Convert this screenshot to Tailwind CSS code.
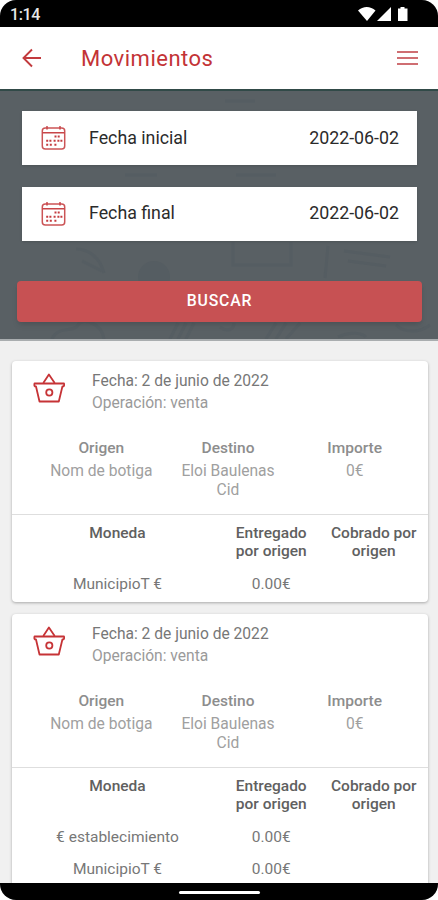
<!DOCTYPE html>
<html lang="es">
<head>
  <meta charset="UTF-8" />
  <meta name="viewport" content="width=device-width, initial-scale=1.0"/>
  <title>Movimientos</title>
  <script src="https://cdn.jsdelivr.net/npm/@tailwindcss/browser@4"></script>
</head>
<body class="bg-white font-['Roboto',sans-serif]">

  <!-- Shared icons -->
  <svg class="hidden">
    <symbol id="calendar" viewBox="0 0 24 24">
      <rect x=".8" y="2" width="22.4" height="21" rx="3" fill="none" stroke="#cb5456" stroke-width="1.5"/>
      <path d="M1 6.800h22" stroke="#c84548" stroke-width="1.5"/>
      <path d="M5.500 .5v2.500M18.500 .5v2.500" stroke="#c84548" stroke-width="1.5" stroke-linecap="round"/>
      <path d="M13 10.500h2m1.200 0h2M4.700 14.800h2m1.200 0h2m2.200 0h2m1.800 0h2m1 0h2M4.700 18.800h2m1.600 0h2m2.600 0h2" stroke="#c43b3f" stroke-width="2"/>
    </symbol>
    <symbol id="basket" viewBox="0 0 34 30">
      <g fill="none" stroke="#c63336" stroke-width="1.800" stroke-linejoin="round">
        <path d="M2.500 10.500h29.500q.8 3-1.600 3l-3.600 15H7.500l-3.500-15q-2.300 0-1.500-3z"/>
        <path d="M11.300 10 16.900 1.500 22.700 10"/>
        <circle cx="17.300" cy="19.500" r="3.100"/>
      </g>
    </symbol>
  </svg>

  <div class="w-[438px] h-[900px] flex flex-col overflow-hidden rounded-[16px] bg-[#f0f0f0]">

    <!-- Status bar -->
    <div class="h-[27px] shrink-0 bg-black text-[#e8e8e8] flex items-center justify-between pl-[10px] pr-[29px]">
      <span class="text-[16px] font-medium leading-none tracking-[-0.4px] pt-[3px]">1:14</span>
      <svg class="w-[51px] h-[16px]" viewBox="0 0 51 16" fill="#fff">
        <path d="M0 4.500C5-.3 12.500-.3 17.500 4.500L9 15z"/>
        <path d="M33 1v14H19z"/>
        <path d="M40 2.500h2.500V1h4v1.500H49.500V15H40z"/>
      </svg>
    </div>

    <!-- Header -->
    <header class="h-[64px] shrink-0 bg-white border-b-2 border-[#314a48] flex items-center pl-[22px] pr-[20px]">
      <svg class="w-[20px] h-[20px]" viewBox="0 0 20 20" fill="none" stroke="#c23b3e" stroke-width="1.900">
        <path d="M19 10H1.500M10 1.500 1.500 10 10 18.500"/>
      </svg>
      <h1 class="ml-[39px] text-[22px] tracking-[0.5px] text-[#c33336] flex-1">Movimientos</h1>
      <svg class="w-[21px] h-[16px]" viewBox="0 0 21 16" stroke="#cf6e72" stroke-width="2.200">
        <path d="M0 2h21M0 8h21M0 14h21"/>
      </svg>
    </header>

    <!-- Search -->
    <section class="relative h-[250px] shrink-0 bg-[#596064] border-b-2 border-[#a9adaf] pl-[17px] pr-[16px] pt-[20px]">
      <svg class="absolute left-0 top-0 w-[438px] h-[248px]" viewBox="0 0 438 248" fill="none" stroke="#555d62" stroke-width="3">
        <path d="M233 151v23h58v-23M328 155l-3 32M344 160l46 6M348 170l38 5"/>
        <path d="M76 158c12 0 24 8 28 24M82 170l20 10"/>
        <circle cx="154" cy="186" r="16" fill="#555d62" stroke="none"/>
        <path d="M52 248c6-14 22-6 26-14s24-2 26 14M170 248l8-16M178 248l8-16M186 248l8-16M266 248l10-16M276 248l10-16M286 248l14-16M220 236c8 6 14 2 14-4M338 246c12-6 24-4 28 0M396 234c8 8 24 8 34 0"/>
        <path d="M125 84h32M236 84h40M225 10h30"/>
      </svg>
      <div class="relative flex flex-col gap-[22px] px-[5px]">
        <div class="h-[54px] bg-white shadow flex items-center pl-[19px] pr-[18px] text-[17.8px] text-[#2b2b2b]">
          <svg class="w-[25px] h-[24px]"><use href="#calendar"/></svg>
          <span class="ml-[23px] flex-1">Fecha inicial</span>
          <span>2022-06-02</span>
        </div>
        <div class="h-[54px] bg-white shadow flex items-center pl-[19px] pr-[18px] pb-[1px] text-[17.8px] text-[#2b2b2b]">
          <svg class="w-[25px] h-[24px]"><use href="#calendar"/></svg>
          <span class="ml-[23px] flex-1">Fecha final</span>
          <span>2022-06-02</span>
        </div>
      </div>
      <button class="relative mt-[40px] w-full h-[41px] pb-[2px] rounded-[4px] bg-[#c75153] text-white text-[15.8px] font-medium tracking-[0.8px] shadow-md">BUSCAR</button>
    </section>

    <!-- Movements -->
    <main class="flex-1 min-h-0 overflow-hidden pl-[12px] pr-[10px] pt-[20px] flex flex-col gap-[12px]">

      <article class="h-[241px] shrink-0 bg-white rounded-[4px] shadow-[0_1px_3px_rgba(0,0,0,0.3)] text-[15.5px]">
        <div class="h-[154px] border-b border-[#dedede]">
          <div class="flex pl-[20px] pt-[9px]">
            <svg class="w-[34px] h-[30px] mt-[3px]"><use href="#basket"/></svg>
            <div class="ml-[26px] leading-[22px]">
              <p class="text-[#777] text-[15.6px]">Fecha: 2 de junio de 2022</p>
              <p class="text-[#9a9a9a] text-[15.6px]">Operación: venta</p>
            </div>
          </div>
          <div class="grid grid-cols-3 w-[380px] ml-[26px] mt-[24px] text-center text-[#a0a0a0]">
            <div class="px-[10px]">
              <h3 class="font-medium text-[#8d8d8d] leading-[20px] mb-[4px]">Origen</h3>
              <p class="leading-[18.5px] text-[15.6px]">Nom de botiga</p>
            </div>
            <div class="px-[10px]">
              <h3 class="font-medium text-[#8d8d8d] leading-[20px] mb-[4px]">Destino</h3>
              <p class="leading-[18.5px] text-[15.6px]">Eloi Baulenas Cid</p>
            </div>
            <div class="px-[10px]">
              <h3 class="font-medium text-[#8d8d8d] leading-[20px] mb-[4px]">Importe</h3>
              <p class="leading-[18.5px] text-[15.6px]">0€</p>
            </div>
          </div>
        </div>
        <div class="grid grid-cols-[2fr_1fr_1fr] mx-[3px] pt-[9px] text-center text-[#777] leading-[18px]">
          <h4 class="font-medium text-[#606060]">Moneda</h4>
          <h4 class="font-medium text-[#606060] px-[6px]">Entregado por origen</h4>
          <h4 class="font-medium text-[#606060]">Cobrado por origen</h4>
          <p class="mt-[15px]">MunicipioT €</p>
          <p class="mt-[15px]">0.00€</p>
        </div>
      </article>

      <article class="h-[300px] shrink-0 bg-white rounded-[4px] shadow-[0_1px_3px_rgba(0,0,0,0.3)] text-[15.5px]">
        <div class="h-[154px] border-b border-[#dedede]">
          <div class="flex pl-[20px] pt-[9px]">
            <svg class="w-[34px] h-[30px] mt-[3px]"><use href="#basket"/></svg>
            <div class="ml-[26px] leading-[22px]">
              <p class="text-[#777] text-[15.6px]">Fecha: 2 de junio de 2022</p>
              <p class="text-[#9a9a9a] text-[15.6px]">Operación: venta</p>
            </div>
          </div>
          <div class="grid grid-cols-3 w-[380px] ml-[26px] mt-[24px] text-center text-[#a0a0a0]">
            <div class="px-[10px]">
              <h3 class="font-medium text-[#8d8d8d] leading-[20px] mb-[4px]">Origen</h3>
              <p class="leading-[18.5px] text-[15.6px]">Nom de botiga</p>
            </div>
            <div class="px-[10px]">
              <h3 class="font-medium text-[#8d8d8d] leading-[20px] mb-[4px]">Destino</h3>
              <p class="leading-[18.5px] text-[15.6px]">Eloi Baulenas Cid</p>
            </div>
            <div class="px-[10px]">
              <h3 class="font-medium text-[#8d8d8d] leading-[20px] mb-[4px]">Importe</h3>
              <p class="leading-[18.5px] text-[15.6px]">0€</p>
            </div>
          </div>
        </div>
        <div class="grid grid-cols-[2fr_1fr_1fr] mx-[3px] pt-[9px] text-center text-[#777] leading-[18px]">
          <h4 class="font-medium text-[#606060]">Moneda</h4>
          <h4 class="font-medium text-[#606060] px-[6px]">Entregado por origen</h4>
          <h4 class="font-medium text-[#606060]">Cobrado por origen</h4>
          <p class="mt-[15px]">€ establecimiento</p>
          <p class="mt-[15px]">0.00€</p>
          <p class="mt-[14px] col-start-1">MunicipioT €</p>
          <p class="mt-[14px]">0.00€</p>
        </div>
      </article>
    </main>

    <!-- Gesture bar -->
    <div class="h-[17px] shrink-0 bg-black flex justify-center pt-[8px]">
      <div class="w-[81px] h-[3px] rounded-full bg-white"></div>
    </div>
  </div>

</body>
</html>
